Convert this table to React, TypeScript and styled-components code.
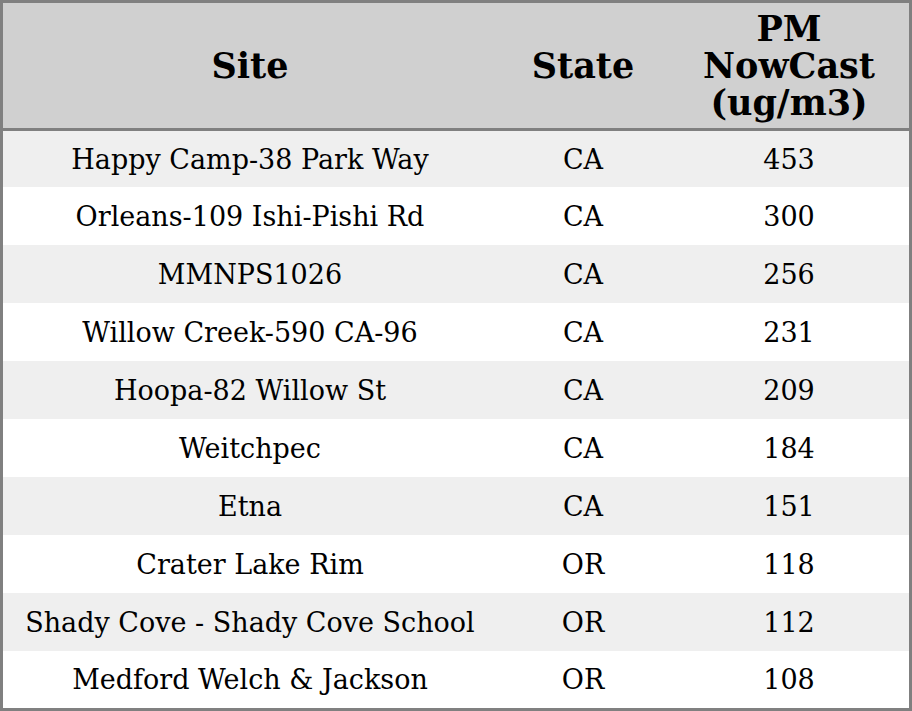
import React from 'react';
import styled, { createGlobalStyle } from 'styled-components';

const GlobalStyle = createGlobalStyle`
  html, body {
    margin: 0;
    padding: 0;
    background: #fff;
  }
  body {
    font-family: "DejaVu Serif", "Liberation Serif", serif;
  }
`;

const Table = styled.table`
  width: 912px;
  height: 711px;
  border-collapse: separate;
  border-spacing: 0;
  border: 3px solid #808080;
  box-sizing: border-box;
  table-layout: fixed;
  color: #000;
`;

const HeadCell = styled.th<{ $w: number }>`
  width: ${props => props.$w}px;
  height: 125px;
  padding: 0;
  background: #d0d0d0;
  border-bottom: 3px solid #808080;
  font-size: 35px;
  font-weight: bold;
  line-height: 37px;
  text-align: center;
  vertical-align: middle;
`;

const Row = styled.tr<{ $striped?: boolean }>`
  height: 58px;
  background: ${props => props.$striped ? '#efefef' : '#ffffff'};

  &:first-child {
    height: 56px;
  }
  &:last-child {
    height: 57px;
  }
`;

const Cell = styled.td`
  padding: 0;
  font-size: 27px;
  text-align: center;
  vertical-align: middle;
  white-space: nowrap;
`;

// 측정소 데이터
const sites = [
  { site: 'Happy Camp-38 Park Way', state: 'CA', pm: 453 },
  { site: 'Orleans-109 Ishi-Pishi Rd', state: 'CA', pm: 300 },
  { site: 'MMNPS1026', state: 'CA', pm: 256 },
  { site: 'Willow Creek-590 CA-96', state: 'CA', pm: 231 },
  { site: 'Hoopa-82 Willow St', state: 'CA', pm: 209 },
  { site: 'Weitchpec', state: 'CA', pm: 184 },
  { site: 'Etna', state: 'CA', pm: 151 },
  { site: 'Crater Lake Rim', state: 'OR', pm: 118 },
  { site: 'Shady Cove - Shady Cove School', state: 'OR', pm: 112 },
  { site: 'Medford Welch & Jackson', state: 'OR', pm: 108 },
];

export default function App() {
  return (
    <>
      <GlobalStyle />
      <Table>
        <thead>
          <tr>
            <HeadCell $w={494}>Site</HeadCell>
            <HeadCell $w={172}>State</HeadCell>
            <HeadCell $w={240}>PM<br />NowCast<br />(ug/m3)</HeadCell>
          </tr>
        </thead>
        <tbody>
          {sites.map((s, i) => (
            <Row key={s.site} $striped={i % 2 === 0}>
              <Cell>{s.site}</Cell>
              <Cell>{s.state}</Cell>
              <Cell>{s.pm}</Cell>
            </Row>
          ))}
        </tbody>
      </Table>
    </>
  );
}
